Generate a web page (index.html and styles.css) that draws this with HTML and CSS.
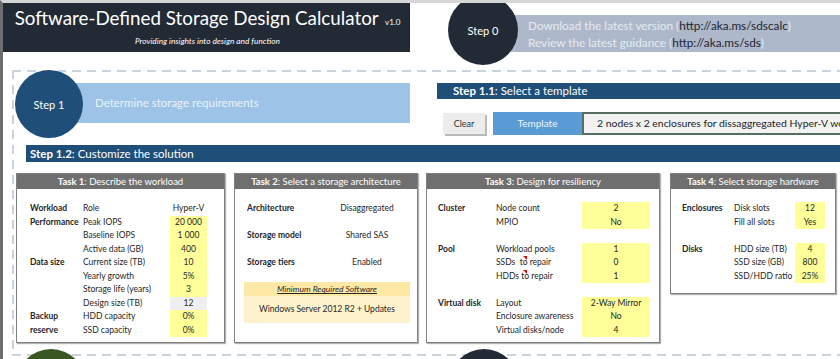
FILE: index.html
```html
<!DOCTYPE html>
<html>
<head>
<meta charset="utf-8">
<link rel="stylesheet" href="styles.css">
</head>
<body>
<div class="frame">
  <div class="top">
    <div class="title-box">
      <div class="title">Software-Defined Storage Design Calculator <span class="ver">v1.0</span></div>
      <div class="subtitle">Providing insights into design and function</div>
    </div>
    <div class="step0">
      <div class="circle dark circle-lg">Step 0</div>
      <div class="step0-bar">
        <div>Download the latest version (<span class="link">http://aka.ms/sdscalc</span>)</div>
        <div>Review the latest guidance (<span class="link">http://aka.ms/sds</span>)</div>
      </div>
    </div>
  </div>

  <div class="section">
    <div class="step1-row">
      <div class="step1">
        <div class="circle blue circle-md">Step 1</div>
        <div class="step1-bar">Determine storage requirements</div>
      </div>
      <div class="step11">
        <div class="bar bar-11"><b>Step 1.1</b>: Select a template</div>
        <div class="template-row">
          <div class="btn-clear">Clear</div>
          <div class="btn-template">Template</div>
          <div class="dropdown">2 nodes x 2 enclosures for dissaggregated Hyper-V workloads</div>
        </div>
      </div>
    </div>

    <div class="bar bar-12"><b>Step 1.2</b>: Customize the solution</div>

    <div class="tasks">
      <div class="task task1">
        <div class="task-head"><b>Task 1</b>: Describe the workload</div>
        <div class="grid grid1">
          <div class="lbl">Workload</div><div>Role</div><div class="val">Hyper-V</div>
          <div class="lbl">Performance</div><div>Peak IOPS</div><div class="val y">20 000</div>
          <div></div><div>Baseline IOPS</div><div class="val y">1 000</div>
          <div></div><div>Active data (GB)</div><div class="val y">400</div>
          <div class="lbl">Data size</div><div>Current size (TB)</div><div class="val y">10</div>
          <div></div><div>Yearly growth</div><div class="val y">5%</div>
          <div></div><div>Storage life (years)</div><div class="val y">3</div>
          <div></div><div>Design size (TB)</div><div class="val g">12</div>
          <div class="lbl">Backup</div><div>HDD capacity</div><div class="val y">0%</div>
          <div class="lbl">reserve</div><div>SSD capacity</div><div class="val y">0%</div>
        </div>
      </div>

      <div class="task task2">
        <div class="task-head"><b>Task 2</b>: Select a storage architecture</div>
        <div class="arch">
          <div class="arch-row"><div class="lbl">Architecture</div><div class="val">Disaggregated</div></div>
          <div class="arch-row"><div class="lbl">Storage model</div><div class="val">Shared SAS</div></div>
          <div class="arch-row"><div class="lbl">Storage tiers</div><div class="val">Enabled</div></div>
        </div>
        <div class="software">
          <div class="software-head">Minimum Required Software</div>
          <div class="software-body">Windows Server 2012 R2 + Updates</div>
        </div>
      </div>

      <div class="task task3">
        <div class="task-head"><b>Task 3</b>: Design for resiliency</div>
        <div class="grid grid3">
          <div class="lbl">Cluster</div><div>Node count</div><div class="val y">2</div>
          <div></div><div>MPIO</div><div class="val y">No</div>
          <div></div><div></div><div></div>
          <div class="lbl">Pool</div><div>Workload pools</div><div class="val y">1</div>
          <div></div><div class="note">SSDs&nbsp; to repair</div><div class="val y">0</div>
          <div></div><div class="note">HDDs to repair</div><div class="val y">1</div>
          <div></div><div></div><div></div>
          <div class="lbl">Virtual disk</div><div>Layout</div><div class="val y">2-Way Mirror</div>
          <div></div><div>Enclosure awareness</div><div class="val y">No</div>
          <div></div><div>Virtual disks/node</div><div class="val y">4</div>
        </div>
      </div>

      <div class="task task4">
        <div class="task-head"><b>Task 4</b>: Select storage hardware</div>
        <div class="grid grid4">
          <div class="lbl">Enclosures</div><div>Disk slots</div><div class="val y">12</div>
          <div></div><div>Fill all slots</div><div class="val y">Yes</div>
          <div></div><div></div><div></div>
          <div class="lbl">Disks</div><div>HDD size (TB)</div><div class="val y">4</div>
          <div></div><div>SSD size (GB)</div><div class="val y">800</div>
          <div></div><div>SSD/HDD ratio</div><div class="val y">25%</div>
        </div>
      </div>
    </div>
  </div>

  <div class="bottom-row">
    <div class="circle green circle-lg"></div>
    <div class="circle dark circle-lg second"></div>
  </div>
</div>
</body>
</html>
```

FILE: styles.css
```css
* { box-sizing: border-box; }
html, body { margin: 0; padding: 0; }
body {
  width: 840px;
  height: 359px;
  overflow: hidden;
  background: #ffffff;
  font-family: Lato, "Open Sans", sans-serif;
  color: #262626;
}
.frame {
  width: 840px;
  height: 359px;
  overflow: hidden;
  border-top: 3px solid #d6d6d6;
  border-left: 3px solid #6e6e6e;
}

/* top area */
.top {
  display: flex;
  align-items: flex-start;
  height: 67px;
}
.title-box {
  width: 407px;
  height: 49px;
  flex-shrink: 0;
  background: #222a36;
  color: #ffffff;
  text-align: center;
  padding-top: 4px;
  padding-left: 2px;
}
.title {
  font-size: 18.8px;
  line-height: 22px;
  letter-spacing: 0;
}
.ver { font-size: 8px; margin-left: 2px; }
.subtitle {
  font-size: 8.3px;
  font-style: italic;
  line-height: 12px;
  margin-top: 2px;
}
.step0 {
  display: flex;
  align-items: flex-start;
  flex: 1;
  min-width: 0;
  margin-left: 38px;
}
.circle {
  border-radius: 50%;
  color: #ffffff;
  display: flex;
  align-items: center;
  justify-content: center;
  position: relative;
  z-index: 1;
  flex-shrink: 0;
  font-size: 11px;
}
.circle-lg { width: 70px; height: 70px; }
.circle-md { width: 68px; height: 68px; }
.dark { background: #222a36; }
.blue { background: #1f4e79; }
.green { background: #385723; }
.step0 .circle { margin-top: -8px; }
.step0-bar {
  flex: 1;
  min-width: 0;
  margin-left: -35px;
  margin-top: 12px;
  height: 37px;
  background: #adb9ca;
  color: #e4eaf1;
  font-size: 11.8px;
  line-height: 17px;
  padding: 2px 0 0 45px;
  white-space: nowrap;
}
.link { color: #1d2430; }

/* dashed section */
.section {
  margin-left: 9px;
  height: 286px;
  background-image:
    repeating-linear-gradient(90deg, #c9d3de 0 9px, transparent 9px 15px),
    repeating-linear-gradient(90deg, #c9d3de 0 9px, transparent 9px 15px),
    repeating-linear-gradient(180deg, #c9d3de 0 9px, transparent 9px 15px);
  background-size: 100% 2px, 100% 2px, 2px 100%;
  background-position: left top, left bottom, left top;
  background-repeat: no-repeat;
}
.step1-row {
  display: flex;
  align-items: flex-start;
}
.step1 {
  display: flex;
  align-items: flex-start;
  width: 398px;
  flex-shrink: 0;
}
.step1 .circle { margin-left: 3px; }
.step1-bar {
  flex: 1;
  margin-left: -34px;
  margin-top: 13px;
  height: 40px;
  background: #9dc3e6;
  color: #eaf2fa;
  font-size: 11.5px;
  line-height: 40px;
  padding-left: 46px;
  white-space: nowrap;
}
.step11 {
  flex: 1;
  min-width: 0;
  margin-left: 27px;
  margin-top: 13px;
}
.bar {
  background: #1f4e79;
  color: #ffffff;
  font-size: 11.5px;
  white-space: nowrap;
}
.bar-11 {
  height: 16px;
  line-height: 16px;
  padding-left: 16px;
}
.template-row {
  display: flex;
  margin-top: 13px;
  height: 23px;
}
.btn-clear {
  flex-shrink: 0;
  margin-left: 6px;
  margin-top: 1px;
  width: 42px;
  height: 21px;
  background: #ececec;
  box-shadow: 2px 2px 0 #b9b9b9;
  font-size: 9px;
  line-height: 21px;
  text-align: center;
  color: #333333;
}
.btn-template {
  flex-shrink: 0;
  margin-left: 8px;
  width: 89px;
  background: #5b9bd5;
  color: #eef5fb;
  font-size: 10px;
  line-height: 23px;
  text-align: center;
}
.dropdown {
  flex: 1;
  min-width: 0;
  border: 2px solid #557060;
  border-right: none;
  background: #f2f2f2;
  font-size: 10.4px;
  line-height: 19px;
  padding-left: 13px;
  white-space: nowrap;
  overflow: hidden;
  color: #222222;
}
.bar-12 {
  margin-top: 7px;
  margin-left: 14px;
  height: 17px;
  line-height: 17px;
  padding-left: 4px;
}

/* tasks */
.tasks {
  display: flex;
  align-items: flex-start;
  margin-top: 11px;
  margin-left: 4px;
}
.task {
  flex-shrink: 0;
  border: 1px solid #808080;
  background: #ffffff;
  box-shadow: 1px 1px 1px rgba(0,0,0,0.3);
}
.task1 { width: 209px; height: 170px; margin-right: 9px; }
.task2 { width: 184px; height: 170px; margin-right: 8px; }
.task3 { width: 234px; height: 170px; margin-right: 10px; }
.task4 { width: 166px; height: 121px; }
.task-head {
  height: 15px;
  background: #6f6f6f;
  color: #ffffff;
  font-size: 9.5px;
  line-height: 15px;
  text-align: center;
  white-space: nowrap;
}
.grid {
  display: grid;
  grid-auto-rows: 13.5px;
  margin-top: 13px;
  font-size: 8.5px;
  line-height: 13.5px;
  white-space: nowrap;
}
.grid > div { position: relative; }
.grid1 { grid-template-columns: 53px 87px 37px; padding-left: 13px; }
.grid3 { grid-template-columns: 58px 86px 68px; padding-left: 11px; }
.grid4 { grid-template-columns: 52px 61px 30px; padding-left: 11px; }
.lbl { font-weight: bold; }
.val { text-align: center; }
.y { background: #ffff99; }
.g { background: #efefef; }
.note::after {
  content: "";
  position: absolute;
  left: 27px;
  top: 0;
  width: 0;
  height: 0;
  border-left: 4px solid transparent;
  border-top: 4px solid #d01010;
}

.arch {
  margin-top: 13px;
  padding-left: 12px;
  font-size: 8.5px;
}
.arch-row {
  display: grid;
  grid-template-columns: 80px 80px;
  height: 27px;
  line-height: 13.5px;
}
.software {
  margin-left: 9px;
  width: 166px;
  margin-top: -1px;
  font-size: 8.5px;
  text-align: center;
}
.software-head {
  height: 14px;
  line-height: 14px;
  background: #fde8a6;
  font-style: italic;
  text-decoration: underline;
}
.software-body {
  height: 27px;
  line-height: 27px;
  background: #fef2cc;
}

/* bottom */
.bottom-row {
  display: flex;
  margin-top: -7px;
}
.bottom-row .green { margin-left: 13px; }
.bottom-row .second { margin-left: 363px; }
```
